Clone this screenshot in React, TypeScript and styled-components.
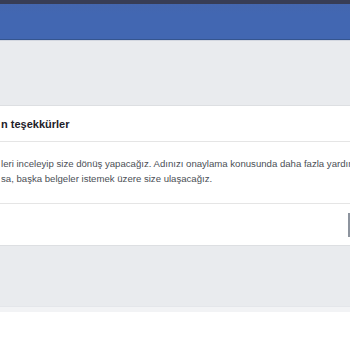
import React from 'react'
import styled, { createGlobalStyle } from 'styled-components'

const GlobalStyle = createGlobalStyle`
  html, body {
    margin: 0;
    padding: 0;
    background: #ffffff;
    overflow: hidden;
  }

  body {
    font-family: 'Liberation Sans', Arial, Helvetica, sans-serif;
    -webkit-font-smoothing: antialiased;
  }
`

const Wrapper = styled.div`
  width: 350px;
  height: 350px;
  overflow: hidden;
  display: flex;
  flex-direction: column;
  background: #ffffff;
`

const TopBar = styled.div`
  height: 4px;
  background: #383d55;
`

const BlueBar = styled.header`
  height: 35px;
  background: linear-gradient(#4466ae, #4267b2 30%, #4267b2);
  border-bottom: 1px solid #35558f;
`

const Content = styled.main`
  background: #e9ebee;
  border-top: 1px solid #d3d7e0;
  padding: 64px 0 60px;
`

const Card = styled.section`
  background: #ffffff;
  border-top: 1px solid #dddfe2;
  border-bottom: 1px solid #dddfe2;
`

const CardTitle = styled.h2`
  margin: 0;
  height: 35px;
  display: flex;
  align-items: center;
  padding-left: 1px;
  font-size: 11px;
  font-weight: 700;
  color: #1d2129;
  border-bottom: 1px solid #e5e5e5;
`

const CardBody = styled.div`
  padding: 14px 0 17px 1px;
  border-bottom: 1px solid #e5e5e5;
`

const Line = styled.p`
  margin: 0;
  font-size: 9.6px;
  line-height: 15px;
  color: #4b4f56;
  white-space: nowrap;
  overflow: hidden;
`

const CardFooter = styled.div`
  height: 41px;
  display: flex;
  align-items: center;
  justify-content: flex-end;
  overflow: hidden;
`

const Button = styled.button`
  flex: none;
  margin: 0 -62px 0 0;
  padding: 0;
  width: 64px;
  height: 24px;
  border: 2px solid #8d949e;
  border-radius: 0;
  background: #f6f7f9;
`

const Bottom = styled.div`
  height: 5px;
  background: #f2f3f5;
  border-top: 1px solid #e4e6ea;
`

function App() {
  return (
    <Wrapper>
      <GlobalStyle />
      <TopBar />
      <BlueBar />
      <Content>
        <Card>
          <CardTitle>n teşekkürler</CardTitle>
          <CardBody>
            <Line>
              leri inceleyip size dönüş yapacağız. Adınızı onaylama konusunda daha fazla yardım
            </Line>
            <Line>sa, başka belgeler istemek üzere size ulaşacağız.</Line>
          </CardBody>
          <CardFooter>
            <Button aria-label="Kapat" />
          </CardFooter>
        </Card>
      </Content>
      <Bottom />
    </Wrapper>
  )
}

export default App
